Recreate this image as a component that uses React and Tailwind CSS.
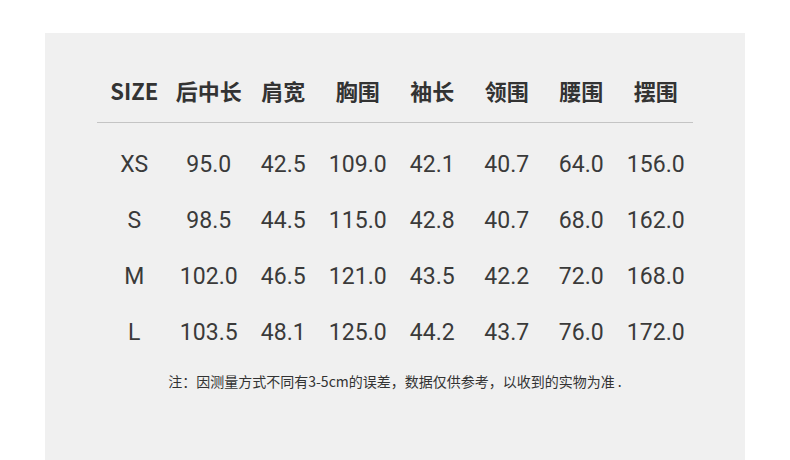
import React from "react";

const headers = ["SIZE", "后中长", "肩宽", "胸围", "袖长", "领围", "腰围", "摆围"];

const rows = [
    ["XS", "95.0", "42.5", "109.0", "42.1", "40.7", "64.0", "156.0"],
    ["S", "98.5", "44.5", "115.0", "42.8", "40.7", "68.0", "162.0"],
    ["M", "102.0", "46.5", "121.0", "43.5", "42.2", "72.0", "168.0"],
    ["L", "103.5", "48.1", "125.0", "44.2", "43.7", "76.0", "172.0"],
];

export default function App() {
    return (
        <div className="w-[790px] h-[460px] bg-white overflow-hidden pt-[33px] pl-[45px]">
            <div className="w-[700px] h-[427px] bg-[#f0f0f0] pt-[38px] pl-[52px]">
                <div className="w-[596px]">
                    <div
                        className="grid grid-cols-8 h-[38px] items-center text-[22px] font-bold text-[#333]"
                        style={{ fontFamily: '"Noto Sans CJK SC", sans-serif' }}
                    >
                        {headers.map(h => (
                            <div key={h} className="text-center leading-none">
                                {h}
                            </div>
                        ))}
                    </div>

                    <div className="mt-[13px] h-px bg-[#c4c4c4]" />

                    <div
                        className="mt-[13px] text-[23px] text-[#3a3a3a]"
                        style={{ fontFamily: "Roboto, sans-serif" }}
                    >
                        {rows.map(r => (
                            <div key={r[0]} className="grid grid-cols-8 h-[56px] items-center">
                                {r.map((v, i) => (
                                    <div key={i} className="text-center leading-none">
                                        {v}
                                    </div>
                                ))}
                            </div>
                        ))}
                    </div>

                    <div
                        className="mt-[11px] h-[20px] leading-[20px] text-center text-[14px] text-[#333]"
                        style={{ fontFamily: '"Noto Sans CJK SC", sans-serif' }}
                    >
                        注：因测量方式不同有3-5cm的误差，数据仅供参考，以收到的实物为准 .
                    </div>
                </div>
            </div>
        </div>
    );
}
